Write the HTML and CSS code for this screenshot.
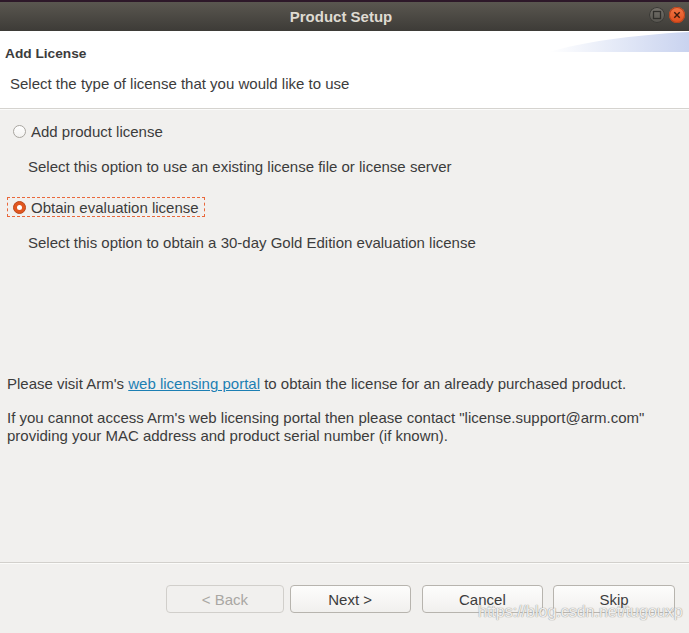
FILE: index.html
```html
<!DOCTYPE html>
<html lang="en">
<head>
    <meta charset="UTF-8">
    <title>Product Setup</title>
    <link rel="stylesheet" href="styles.css">
</head>
<body>
    <div class="window">
        <div class="titlebar">
            <span class="title">Product Setup</span>
            <div class="winbtns">
                <span class="wbtn wmax">
                    <svg width="16" height="16" viewBox="0 0 16 16"><rect x="4.5" y="4.5" width="7" height="7" fill="none" stroke="#2f2e2b" stroke-width="1.3"/></svg>
                </span>
                <span class="wbtn wclose">
                    <svg width="16" height="16" viewBox="0 0 16 16"><path d="M5.3 5.3 L10.7 10.7 M10.7 5.3 L5.3 10.7" stroke="#3a1a0c" stroke-width="1.4"/></svg>
                </span>
            </div>
        </div>

        <div class="header">
            <svg class="swoosh" width="140" height="22" viewBox="0 0 140 22">
                <defs>
                    <linearGradient id="sw" x1="0" y1="0" x2="1" y2="0">
                        <stop offset="0" stop-color="#ffffff"/>
                        <stop offset="0.45" stop-color="#e6ebf8"/>
                        <stop offset="1" stop-color="#c9d3ef"/>
                    </linearGradient>
                </defs>
                <path d="M0 21 C30 12 80 4 140 1 L140 21 Z" fill="url(#sw)"/>
            </svg>
            <div class="h-title">Add License</div>
            <div class="h-sub">Select the type of license that you would like to use</div>
        </div>

        <div class="content">
            <label class="opt">
                <span class="radio"></span>
                <span>Add product license</span>
            </label>
            <p class="desc">Select this option to use an existing license file or license server</p>

            <label class="opt focus">
                <span class="radio checked"></span>
                <span>Obtain evaluation license</span>
            </label>
            <p class="desc">Select this option to obtain a 30-day Gold Edition evaluation license</p>

            <p class="note first">Please visit Arm's <a href="#">web licensing portal</a> to obtain the license for an already purchased product.</p>
            <p class="note">If you cannot access Arm's web licensing portal then please contact "license.support@arm.com"<br>providing your MAC address and product serial number (if known).</p>
        </div>

        <div class="footer">
            <button class="btn back" disabled>&lt; Back</button>
            <button class="btn next">Next &gt;</button>
            <button class="btn cancel">Cancel</button>
            <button class="btn skip">Skip</button>
        </div>

        <div class="watermark">https://blog.csdn.net/tugouxp</div>
    </div>
</body>
</html>
```

FILE: styles.css
```css
body {
    margin: 0;
    background: #f1f0ee;
    font-family: "Liberation Sans", Arial, sans-serif;
    font-size: 15px;
    color: #3c3c3c;
}

.window {
    position: relative;
    width: 689px;
    height: 633px;
    overflow: hidden;
}

.titlebar {
    position: relative;
    height: 29px;
    border-top: 2px solid #2d1829;
    background: linear-gradient(#5a5750, #3d3b37);
    display: flex;
    align-items: center;
    justify-content: center;
    padding-right: 7px;
}
.title {
    color: #dfdbd2;
    font-weight: bold;
    font-size: 15px;
    margin-top: -1px;
}
.winbtns {
    position: absolute;
    right: 4px;
    top: 5px;
    display: flex;
    gap: 4px;
}
.wbtn {
    width: 16px;
    height: 16px;
    border-radius: 50%;
    display: block;
}
.wbtn svg {
    display: block;
}
.wmax {
    background: linear-gradient(#76736d, #54524d);
    box-shadow: inset 0 0 0 1px #3a3935;
}
.wclose {
    background: linear-gradient(#f07746, #df4d1c);
    box-shadow: inset 0 0 0 1px #b8421c;
}

.header {
    position: relative;
    background: #fff;
    height: 78px;
    border-bottom: 1px solid #d5d3cf;
    box-sizing: border-box;
    padding-top: 14px;
}
.swoosh {
    position: absolute;
    top: 0;
    right: 0;
}
.h-title {
    font-weight: bold;
    font-size: 13.7px;
    line-height: 18px;
    padding-left: 5px;
    color: #3c3c3c;
}
.h-sub {
    line-height: 18px;
    padding-left: 10px;
    margin-top: 12px;
}

.content {
    height: 453px;
    padding-top: 11px;
    box-sizing: border-box;
    border-top: 1px solid #fbfbfa;
}
.opt {
    display: inline-flex;
    align-items: center;
    height: 18px;
    margin-left: 7px;
    padding: 0 5px 0 5px;
    border: 1px dashed transparent;
}
.opt.focus {
    border-color: #e9683b;
    margin-top: 21px;
}
.radio {
    width: 11px;
    height: 11px;
    border-radius: 50%;
    border: 1px solid #a9a6a0;
    background: linear-gradient(#ffffff, #f3f2f0);
    margin-right: 5px;
    position: relative;
}
.radio.checked {
    background: #e2561f;
    border-color: #b9481c;
}
.radio.checked::after {
    content: "";
    position: absolute;
    left: 3px;
    top: 3px;
    width: 5px;
    height: 5px;
    border-radius: 50%;
    background: #fff;
}
.desc {
    margin: 17px 0 0 28px;
    line-height: 18px;
}
.note {
    margin: 16px 0 0 7px;
    line-height: 18px;
}
.note.first {
    margin-top: 123px;
}
.note a {
    color: #1c7fb3;
    text-decoration: underline;
}

.footer {
    height: 100px;
    border-top: 1px solid #d2d0cc;
    box-shadow: inset 0 1px 0 #fbfbf9;
    box-sizing: border-box;
    display: flex;
    align-items: flex-start;
    padding: 22px 14px 0 166px;
}
.btn {
    height: 28px;
    border: 1px solid #b7b4ae;
    border-radius: 4px;
    background: linear-gradient(#fdfdfc, #f1f0ee);
    font-family: "Liberation Sans", Arial, sans-serif;
    font-size: 15px;
    color: #3c3c3c;
    padding: 0;
}
.back {
    width: 118px;
    color: #a9a7a3;
    border-color: #d1cfcb;
    background: #f1f0ee;
}
.next {
    width: 121px;
    margin-left: 6px;
}
.cancel {
    width: 122px;
    margin-left: 11px;
}
.skip {
    width: 122px;
    margin-left: 10px;
}

.watermark {
    position: absolute;
    left: 478px;
    top: 605px;
    font-size: 16px;
    line-height: 14px;
    color: rgba(255, 255, 255, 0.85);
    text-shadow: 0 0 1px #9c9a96, 0 0 1px #9c9a96;
}
```
